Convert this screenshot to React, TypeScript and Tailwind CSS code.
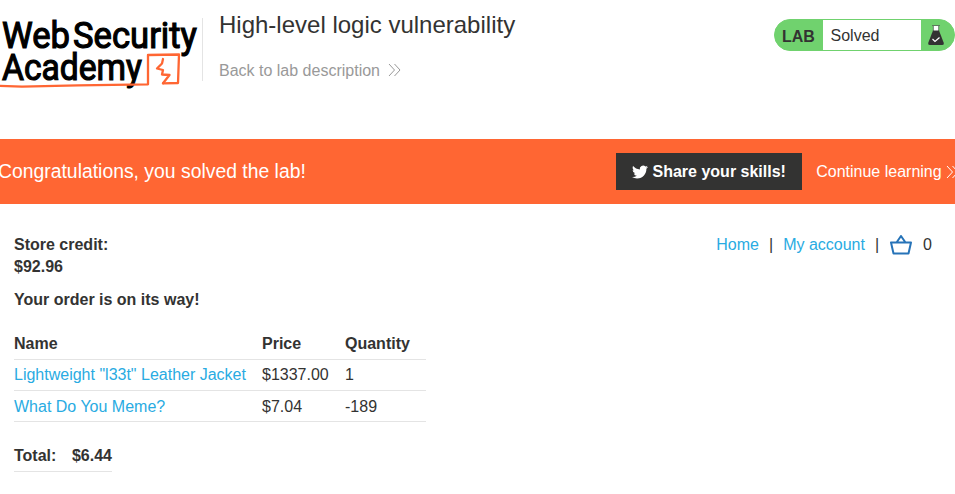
import React from "react";

const products = [
  { name: 'Lightweight "l33t" Leather Jacket', price: "$1337.00", quantity: "1" },
  { name: "What Do You Meme?", price: "$7.04", quantity: "-189" },
];

function Chevrons({ className }: { className: string }) {
  return (
    <svg width="13" height="14" viewBox="0 0 13 14" fill="none" stroke="currentColor" strokeWidth="1" className={className}>
      <path d="M1 1l5.500 6L1 13M6.500 1L12 7l-5.500 6" />
    </svg>
  );
}

function Logo() {
  return (
    <svg width="202" height="90" viewBox="0 0 202 90" className="shrink-0">
      <g fill="#000" stroke="#000" strokeWidth="1.2" fontFamily="Roboto, sans-serif" fontWeight="400" fontSize="37.500">
        <text x="2" y="47.600" textLength="68" lengthAdjust="spacingAndGlyphs">Web</text>
        <text x="73" y="47.600" textLength="124" lengthAdjust="spacingAndGlyphs">Security</text>
        <text x="2" y="80" textLength="140" lengthAdjust="spacingAndGlyphs">Academy</text>
      </g>
      <g fill="none" stroke="#ff6633" strokeLinejoin="round" strokeLinecap="round">
        <path d="M0 85.800L22 86.600L78 85.300L148 84.300L148 55L179 54.500L178 83L163 83.400" strokeWidth="2.300" />
        <path d="M163 59L162 63.500L157 68.500L163 70L162 74.500L169.500 75L163 83.200" strokeWidth="2.300" />
      </g>
    </svg>
  );
}

function Flask() {
  return (
    <svg width="18" height="22" viewBox="0 0 18 22">
      <path d="M6.500 2h5v6h-5z" fill="#fff" />
      <path d="M5 1.500h8M6.300 2v5M11.700 2v5" stroke="#555" strokeWidth="0.700" />
      <path d="M6 6.500h6l4.800 12.500q.5 2-1.500 2H2.700q-2 0-1.500-2z" fill="#333332" />
      <path d="M5.500 15l2.500 2.500 4.500-4" fill="none" stroke="#fff" strokeWidth="1.200" />
    </svg>
  );
}

function Basket() {
  return (
    <svg width="24" height="20" viewBox="0 0 24 20" fill="none" stroke="#2673b8" strokeWidth="2" strokeLinejoin="round">
      <path d="M2 7.500h20l-2.500 11h-15zM7.500 7.500L12 1l4.500 6.500" />
    </svg>
  );
}

export default function App() {
  return (
    <div className="h-[494px] w-full overflow-hidden bg-white font-['Liberation_Sans',Arial,sans-serif] text-base leading-[22px] text-[#333332]">
      <header className="flex h-[139px] items-start">
        <Logo />
        <div className="mt-[18px] h-[63px] w-px shrink-0 bg-[#e4e4e4]" />
        <div className="ml-4 flex-1 pt-[9px]">
          <h1 className="text-2xl leading-8">High-level logic vulnerability</h1>
          <a className="mt-[19px] flex items-center gap-2 text-[#999]">
            Back to lab description
            <Chevrons className="mb-0.5 text-[#999]" />
          </a>
        </div>
        <div className="mt-[19px] flex h-8 w-[181px] shrink-0 items-stretch overflow-hidden rounded-full border border-[#70d26e] bg-[#70d26e]">
          <span className="flex w-12 items-center pt-[3px] pl-[7px] font-bold">LAB</span>
          <span className="flex w-[98px] items-center bg-white pt-0.5 pl-[7.500px]">Solved</span>
          <span className="flex flex-1 items-center pl-[6px]"><Flask /></span>
        </div>
      </header>

      <section className="flex h-[65px] items-center bg-[#ff6633] text-white">
        <p className="-ml-0.5 flex-1 pb-px text-[19.36px]">Congratulations, you solved the lab!</p>
        <button className="flex h-[37px] w-[186px] items-center gap-[4.500px] bg-[#333332] pl-4 font-bold whitespace-nowrap">
          <svg width="16" height="16" viewBox="0 0 24 24" fill="currentColor" className="shrink-0">
            <path d="M23.950 4.570a10 10 0 0 1-2.820.770 4.960 4.960 0 0 0 2.160-2.720c-.950.550-2 .950-3.130 1.180a4.920 4.920 0 0 0-8.380 4.480C7.690 8.100 4.070 6.130 1.640 3.160a4.820 4.820 0 0 0-.670 2.480c0 1.710.870 3.210 2.190 4.100a4.900 4.900 0 0 1-2.230-.620v.060a4.920 4.920 0 0 0 3.950 4.830 5 5 0 0 1-2.210.080 4.940 4.940 0 0 0 4.600 3.420A9.870 9.870 0 0 1 0 19.540a13.990 13.990 0 0 0 7.560 2.210c9.050 0 14-7.500 14-13.980 0-.210 0-.420-.020-.630a9.940 9.940 0 0 0 2.460-2.550z" />
          </svg>
          Share your skills!
        </button>
        <a className="ml-[14.200px] flex w-[138.800px] items-center gap-[4.500px] overflow-hidden whitespace-nowrap">
          Continue learning
          <Chevrons className="shrink-0" />
        </a>
      </section>

      <main className="flex items-start justify-between pt-[30px] pr-[23px] pl-[14px]">
        <div>
          <p className="font-bold">Store credit:<br />$92.96</p>
          <p className="mt-[11px] font-bold">Your order is on its way!</p>
          <table className="mt-4 w-[412px] table-fixed border-collapse text-left">
            <colgroup>
              <col className="w-[248px]" />
              <col className="w-[83px]" />
              <col className="w-[81px]" />
            </colgroup>
            <thead>
              <tr className="h-8 border-b border-[#e4e4e4]">
                <th className="pt-0.5">Name</th>
                <th className="pt-0.5">Price</th>
                <th className="pt-0.5">Quantity</th>
              </tr>
            </thead>
            <tbody>
              {products.map((p, i) => (
                <tr key={p.name} className={i === 1 ? "h-[31px] border-b border-[#e4e4e4] *:pt-0.5" : "h-[31px] border-b border-[#e4e4e4]"}>
                  <td className="text-[#29abe2]">{p.name}</td>
                  <td>{p.price}</td>
                  <td>{p.quantity}</td>
                </tr>
              ))}
            </tbody>
          </table>
          <div className="mt-[18px] flex h-8 w-[98px] items-center justify-between border-b border-[#e4e4e4] pt-0.5 font-bold">
            <span>Total:</span><span>$6.44</span>
          </div>
        </div>
        <nav className="flex h-[22px] items-center gap-[10px]">
          <a className="text-[#29abe2]">Home</a>
          <span>|</span>
          <a className="text-[#29abe2]">My account</a>
          <span>|</span>
          <Basket />
          <span>0</span>
        </nav>
      </main>
    </div>
  );
}
